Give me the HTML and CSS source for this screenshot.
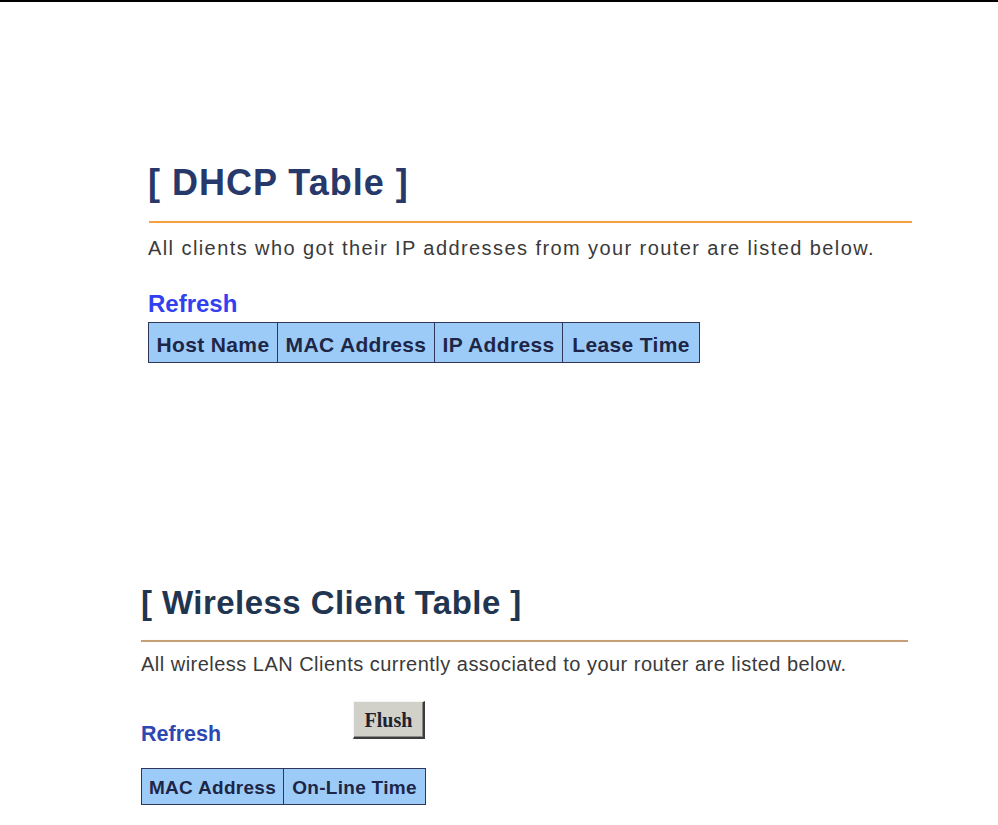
FILE: index.html
```html
<!DOCTYPE html>
<html>
<head>
<meta charset="utf-8">
<title>DHCP Table</title>
<link rel="stylesheet" href="styles.css">
</head>
<body>
<div class="topline"></div>

<section class="sec sec-dhcp">
  <h1 class="title title-dhcp">[ DHCP Table ]</h1>
  <div class="rule rule-dhcp"></div>
  <p class="desc desc-dhcp">All clients who got their IP addresses from your router are listed below.</p>
  <a class="refresh refresh-dhcp" href="#">Refresh</a>
  <table class="grid grid-dhcp">
    <tr>
      <th class="c-host">Host Name</th>
      <th class="c-mac">MAC Address</th>
      <th class="c-ip">IP Address</th>
      <th class="c-lease">Lease Time</th>
    </tr>
  </table>
</section>

<section class="sec sec-wl">
  <h1 class="title title-wl">[ Wireless Client Table ]</h1>
  <div class="rule rule-wl"></div>
  <p class="desc desc-wl">All wireless LAN Clients currently associated to your router are listed below.</p>
  <div class="actions">
    <a class="refresh refresh-wl" href="#">Refresh</a>
    <button class="flush" type="button">Flush</button>
  </div>
  <table class="grid grid-wl">
    <tr>
      <th class="c-wmac">MAC Address</th>
      <th class="c-wtime">On-Line Time</th>
    </tr>
  </table>
</section>
</body>
</html>
```
FILE: styles.css
```css
html, body {
  margin: 0;
  padding: 0;
  background: #ffffff;
}

body {
  font-family: "Liberation Sans", Arial, sans-serif;
  color: #333333;
}

.topline {
  height: 2px;
  background: #000000;
}

.sec {
  display: flex;
  flex-direction: column;
  align-items: flex-start;
}

.sec-dhcp {
  padding-left: 148px;
}

.sec-wl {
  padding-left: 141px;
}

.title {
  margin: 0;
  font-weight: bold;
  white-space: nowrap;
}

.title-dhcp {
  margin-top: 161px;
  font-size: 36px;
  line-height: 40px;
  letter-spacing: 1px;
  color: #26396a;
}

.title-wl {
  margin-top: 222px;
  font-size: 33px;
  line-height: 36px;
  letter-spacing: 0.45px;
  color: #1f3550;
}

.rule {
  height: 2px;
}

.rule-dhcp {
  margin-top: 18px;
  width: 763px;
  margin-left: 1px;
  background: #f7a040;
}

.rule-wl {
  margin-top: 19px;
  width: 767px;
  background: #c7a079;
  box-shadow: 0 0 1px #f3e2b8;
}

.desc {
  margin: 0;
  font-size: 20px;
  line-height: 22px;
  color: #3a3a3a;
  white-space: nowrap;
}

.desc-dhcp {
  margin-top: 14px;
  letter-spacing: 1.42px;
}

.desc-wl {
  margin-top: 11px;
  letter-spacing: 0.48px;
}

.refresh {
  font-weight: bold;
  text-decoration: none;
  white-space: nowrap;
}

.refresh-dhcp {
  margin-top: 32px;
  font-size: 24px;
  line-height: 26px;
  color: #3241ef;
}

.actions {
  display: flex;
  align-items: flex-start;
  margin-top: 26px;
}

.refresh-wl {
  width: 212px;
  margin-top: 21px;
  font-size: 21.5px;
  line-height: 24px;
  color: #2d48b3;
}

.flush {
  box-sizing: border-box;
  width: 72px;
  height: 38px;
  padding: 0;
  margin: 0;
  font-family: "Liberation Serif", "Times New Roman", serif;
  font-weight: bold;
  font-size: 20px;
  line-height: 34px;
  color: #1e2230;
  background: #d2d1c9;
  border-style: solid;
  border-width: 1px 2px 2px 1px;
  border-color: #f4f4f0 #3c3c3c #3c3c3c #f4f4f0;
  box-shadow: inset -1px -1px 0 #8c8a84;
}

.grid {
  border-collapse: collapse;
  background: #9dcbf8;
}

.grid th {
  padding: 0;
  text-align: center;
  font-weight: bold;
  color: #1d2647;
  border: 1px solid #2f3659;
  white-space: nowrap;
}

.grid-dhcp {
  margin-top: 5px;
}

.grid-dhcp th {
  font-size: 21px;
  letter-spacing: 0.35px;
  line-height: 24px;
  padding-top: 10px;
  padding-bottom: 5px;
}

.c-host { width: 128px; }
.c-mac { width: 156px; }
.c-ip { width: 127px; }
.c-lease { width: 136px; }

.grid-wl {
  margin-top: 22px;
}

.grid-wl th {
  font-size: 19px;
  letter-spacing: 0.3px;
  line-height: 22px;
  padding-top: 8px;
  padding-bottom: 5px;
}

.c-wmac { width: 141px; }
.c-wtime { width: 141px; }
```
